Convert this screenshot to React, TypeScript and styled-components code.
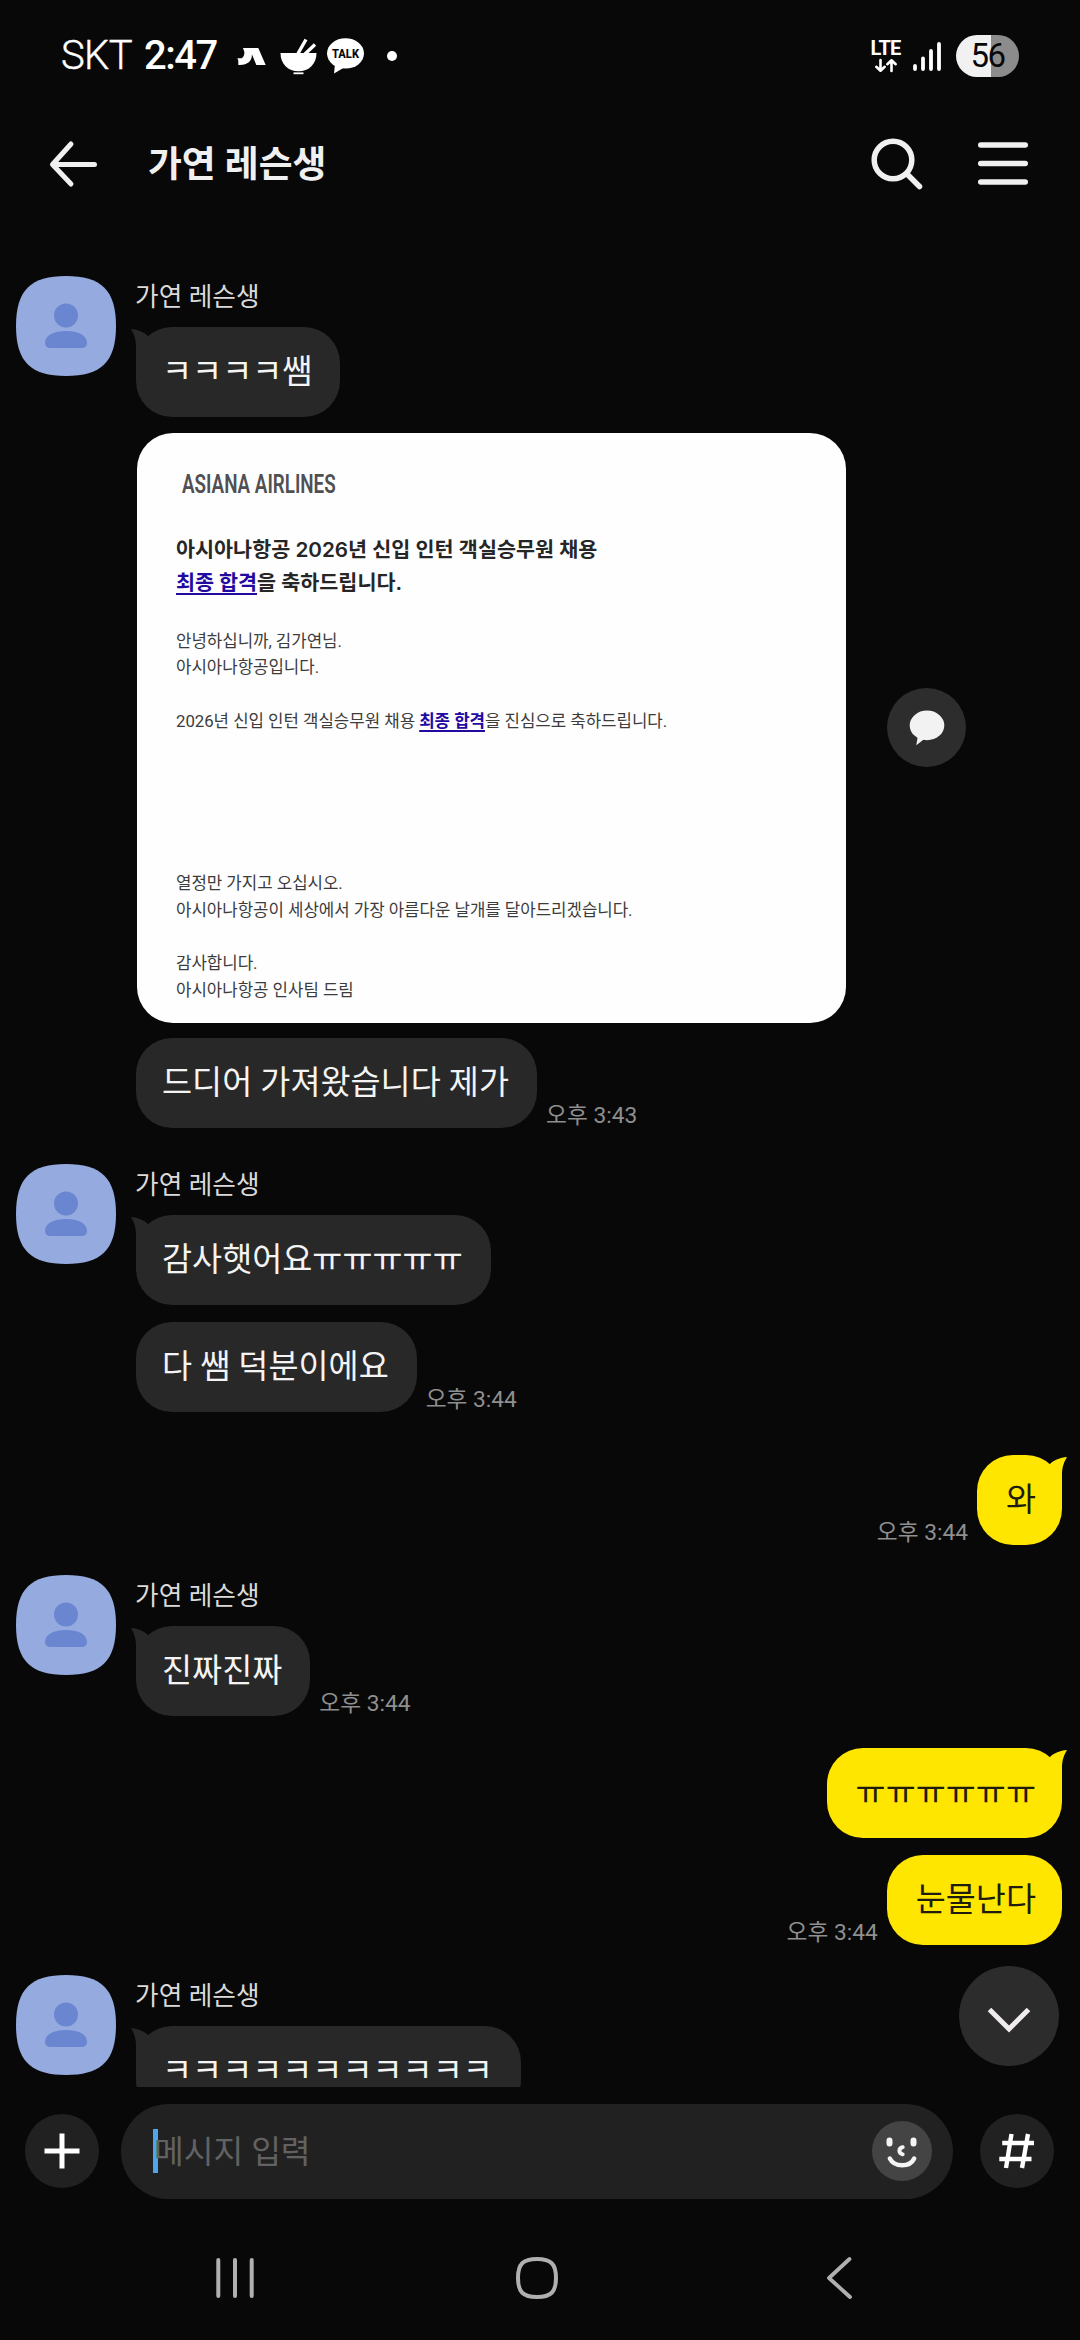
import React from 'react';
import styled, { createGlobalStyle, css } from 'styled-components';

const GlobalStyle = createGlobalStyle`
  * { box-sizing: border-box; }
  body {
    margin: 0;
    background: #080808;
    font-family: Roboto, 'Noto Sans CJK KR', sans-serif;
  }
  svg { display: block; flex: none; overflow: visible; }
`;

const Screen = styled.div`
  position: relative;
  display: flex;
  flex-direction: column;
  width: 1080px;
  height: 2340px;
  overflow: hidden;
  background: #080808;
  color: #f2f2f2;
`;

/* ---------- status bar ---------- */

const StatusBar = styled.header`
  display: flex;
  align-items: center;
  justify-content: space-between;
  height: 112px;
  padding: 0 61px 0 61px;
`;

const StatusSide = styled.div`
  display: flex;
  align-items: center;
`;

const Carrier = styled.span`
  width: 83px;
  font-size: 40px;
  font-weight: 300;
  line-height: 112px;
  letter-spacing: -0.6px;
  color: #fff;
  -webkit-text-stroke: 0.4px #fff;
`;

const Clock = styled.span`
  width: 93px;
  font-size: 40px;
  font-weight: 500;
  line-height: 112px;
  letter-spacing: -1.5px;
  color: #fff;
`;

const StatusIcons = styled.div`
  display: flex;
  align-items: center;
`;

const Network = styled.div`
  display: flex;
  flex-direction: column;
  align-items: center;
  gap: 3px;
  width: 31px;
  margin-right: 12px;
`;

const NetworkLabel = styled.span`
  font-size: 20px;
  font-weight: 700;
  line-height: 15px;
  letter-spacing: -0.8px;
  color: #fff;
`;

const Battery = styled.div`
  display: flex;
  align-items: center;
  justify-content: center;
  width: 63px;
  height: 42px;
  margin-left: 15px;
  border-radius: 21px;
  background: linear-gradient(90deg, #f1f1f1 0 56%, #8c8c8c 56%);
  color: #080808;
  font-size: 33px;
  font-weight: 400;
  line-height: 42px;
  letter-spacing: -1.5px;
`;

/* ---------- title bar ---------- */

const TitleBar = styled.nav`
  display: flex;
  align-items: center;
  height: 104px;
  padding: 0 52px 0 49px;
`;

const Title = styled.h1`
  flex: 1;
  margin: 1px 0 0 51px;
  font-size: 36.8px;
  font-weight: 700;
  line-height: 50px;
  color: #f0f0f0;
`;

const TitleActions = styled.div`
  display: flex;
  gap: 55px;
`;

/* ---------- conversation ---------- */

const Conversation = styled.main`
  display: flex;
  flex-direction: column;
  height: 1871px;
  padding-top: 60px;
  overflow: hidden;
`;

const Group = styled.section<{ $mine?: boolean; $before?: number }>`
  display: flex;
  flex: none;
  margin-top: ${(p) => p.$before ?? 0}px;
  justify-content: ${(p) => (p.$mine ? 'flex-end' : 'flex-start')};
  padding: ${(p) => (p.$mine ? '0 18px 0 0' : '0 0 0 16px')};
  gap: 20px;
`;

const Stack = styled.div<{ $mine?: boolean; $gap?: number }>`
  display: flex;
  flex-direction: column;
  align-items: ${(p) => (p.$mine ? 'flex-end' : 'flex-start')};
  gap: ${(p) => p.$gap ?? 17}px;
`;

const Messages = styled.div`
  display: flex;
  flex-direction: column;
`;

const Sender = styled.div`
  height: 51px;
  margin-left: -1px;
  font-size: 25.7px;
  line-height: 43px;
  color: #dadada;
`;

const Row = styled.div<{ $align?: string; $gap?: number }>`
  display: flex;
  align-items: ${(p) => p.$align ?? 'flex-end'};
  gap: ${(p) => p.$gap ?? 9}px;
`;

const Bubble = styled.div<{ $mine?: boolean }>`
  position: relative;
  height: 90px;
  border-radius: 36px;
  font-size: 32.7px;
  line-height: 90px;
  white-space: nowrap;
  ${(p) =>
    p.$mine
      ? css`
          padding: 0 26px 0 29px;
          background: #ffe600;
          color: #1e1c0c;
        `
      : css`
          padding: 0 28px 0 26px;
          background: #282828;
          color: #f4f4f4;
        `}
`;

const Tail = styled.svg<{ $mine?: boolean }>`
  position: absolute;
  top: 0;
  ${(p) =>
    p.$mine
      ? css`
          right: 0;
          transform: scaleX(-1);
          fill: #ffe600;
        `
      : css`
          left: 0;
          fill: #282828;
        `}
`;

const BubbleText = styled.span`
  position: relative;
`;

const Time = styled.time`
  font-size: 22.7px;
  line-height: 24px;
  white-space: nowrap;
  color: #8f8f8f;
`;

/* ---------- letter card ---------- */

const Letter = styled.article`
  width: 709px;
  height: 590px;
  margin-left: 1px;
  padding: 36px 39px 0;
  border-radius: 36px;
  background: #fefefe;
  color: #3c3c3c;
`;

const Brand = styled.div`
  height: 64px;
  padding-left: 6px;
  font-size: 25px;
  font-weight: 600;
  line-height: 32px;
  color: #505052;
  white-space: nowrap;
`;

const BrandText = styled.span`
  display: inline-block;
  transform: scaleX(0.752);
  transform-origin: 0 50%;
`;

const LetterTitle = styled.h2`
  margin: 0 0 28px;
  font-family: Inter, 'Noto Sans CJK KR', sans-serif;
  font-size: 20.7px;
  font-weight: 600;
  line-height: 33.5px;
  color: #262626;
  white-space: nowrap;
`;

const LetterLine = styled.p<{ $after?: number }>`
  margin: 0 0 ${(p) => (p.$after ?? 0) * 26.9}px;
  font-size: 16.8px;
  line-height: 26.9px;
  letter-spacing: -0.03px;
  white-space: nowrap;
`;

const Mark = styled.u`
  font-weight: 700;
  color: #2209a0;
  text-decoration-thickness: 2px;
  text-underline-offset: 3px;
`;

const RoundButton = styled.button<{ $size: number; $bg: string }>`
  display: flex;
  flex: none;
  align-items: center;
  justify-content: center;
  width: ${(p) => p.$size}px;
  height: ${(p) => p.$size}px;
  padding: 0;
  border: 0;
  border-radius: 50%;
  background: ${(p) => p.$bg};
`;

const JumpDown = styled.div`
  position: absolute;
  top: 1966px;
  right: 21px;
`;

/* ---------- composer ---------- */

const Composer = styled.footer`
  display: flex;
  align-items: center;
  height: 127px;
  padding: 1px 26px 0 25px;
`;

const Field = styled.div`
  display: flex;
  flex: 1;
  align-items: center;
  height: 95px;
  margin: 0 27px 0 22px;
  padding: 0 21px 0 32px;
  border-radius: 48px;
  background: #212121;
`;

const Caret = styled.i`
  width: 5px;
  height: 44px;
  margin-right: -4px;
  background: #4ea5ee;
`;

const Placeholder = styled.span`
  flex: 1;
  padding-top: 2px;
  font-size: 32.3px;
  line-height: 50px;
  color: #626262;
`;

const SystemNav = styled.nav`
  display: flex;
  align-items: center;
  height: 126px;
  padding: 1px 228px 0 216px;
`;

const HomeKey = styled.svg`
  margin: 0 auto 0 262px;
`;

const stroke = { fill: 'none', strokeLinecap: 'round', strokeLinejoin: 'round' } as const;

const Avatar = () => (
  <svg width="100" height="100" viewBox="0 0 100 100">
    <path
      d="M50 0C85 0 100 14 100 50S85 100 50 100 0 86 0 50 15 0 50 0Z"
      fill="#95aade"
    />
    <circle cx="50" cy="39.5" r="12" fill="#6a86d1" />
    <path d="M29 67C29 59 38 55 50 55S71 59 71 67C71 70 69 72 65 72H35C31 72 29 70 29 67Z" fill="#6a86d1" />
  </svg>
);

type MessageProps = { text: string; time?: string; mine?: boolean; tail?: boolean };

const Message = ({ text, time, mine, tail }: MessageProps) => (
  <Row>
    {mine && time && <Time>{time}</Time>}
    <Bubble $mine={mine}>
      {tail && (
        <Tail $mine={mine} width="40" height="40" viewBox="0 0 40 40">
          <path d="M-5 2C2 2.5 8 5 12 9L32 20V38H0V20C0 12 -2 7 -5 2Z" />
        </Tail>
      )}
      <BubbleText>{text}</BubbleText>
    </Bubble>
    {!mine && time && <Time>{time}</Time>}
  </Row>
);

type GroupProps = { before?: number; gap?: number; children: React.ReactNode };

const Incoming = ({ before, gap, children }: GroupProps) => (
  <Group $before={before}>
    <Avatar />
    <Messages>
      <Sender>가연 레슨생</Sender>
      <Stack $gap={gap}>{children}</Stack>
    </Messages>
  </Group>
);

const Outgoing = ({ before, gap, children }: GroupProps) => (
  <Group $mine $before={before}>
    <Stack $mine $gap={gap}>
      {children}
    </Stack>
  </Group>
);

export default function App() {
  return (
    <Screen>
      <GlobalStyle />
      <StatusBar>
        <StatusSide>
          <Carrier>SKT</Carrier>
          <Clock>2:47</Clock>
          <StatusIcons>
            <svg width="43" height="17" viewBox="0 0 43 17" fill="#fff">
              <path d="M6 0H21.3L28.7 17H19.3L14.9 6.2C15.2 13 10.5 17.6 1.3 17V12.8L.4 10.2H4.6C7.4 8.6 7.6 5 7.2 3.6Z" />
            </svg>
            <svg width="47" height="37" viewBox="0 0 47 37" fill="#fff">
              <path d="M.5 15H36.5C36.5 26 29 33.3 18.5 33.3S.5 26 .5 15Z" />
              <path d="M26 1.5L18 15.5M35 6.5L25 16" stroke="#fff" strokeWidth="3.4" />
              <path d="M13.5 35.3H23.5" stroke="#fff" strokeWidth="1.8" />
            </svg>
            <svg width="49" height="36" viewBox="0 0 49 36" fill="#fff">
              <ellipse cx="18.5" cy="15.4" rx="18.5" ry="15.2" />
              <path d="M8 26L7 35.5L18 29Z" />
              <text
                x="5"
                y="20"
                textLength="27"
                lengthAdjust="spacingAndGlyphs"
                fontFamily="Roboto, sans-serif"
                fontSize="12.5"
                fontWeight="800"
                fill="#080808"
              >
                TALK
              </text>
            </svg>
            <svg width="30" height="10" viewBox="0 0 30 10" fill="#fff">
              <circle cx="16" cy="5" r="5" />
            </svg>
          </StatusIcons>
        </StatusSide>
        <StatusSide>
          <Network>
            <NetworkLabel>LTE</NetworkLabel>
            <svg width="22" height="13" viewBox="0 0 22 13" {...stroke} stroke="#fff" strokeWidth="2.6">
              <path d="M5.5 1V11.5M1.3 7.8L5.5 11.7L9.7 7.8M16.5 12V1.5M12.3 5.2L16.5 1.3L20.7 5.2" />
            </svg>
          </Network>
          <svg width="28" height="29" viewBox="0 0 28 29" {...stroke} stroke="#fff" strokeWidth="3.8">
            <path d="M2 24V27M10 16.5V27M18 9V27M26 2V27" />
          </svg>
          <Battery>56</Battery>
        </StatusSide>
      </StatusBar>

      <TitleBar>
        <svg width="48" height="46" viewBox="0 0 48 46" {...stroke} stroke="#f0f0f0" strokeWidth="5">
          <path d="M45.5 23.5H4M22 3L3.5 23.5L22 43" />
        </svg>
        <Title>가연 레슨생</Title>
        <TitleActions>
          <svg width="52" height="52" viewBox="0 0 52 52" {...stroke} stroke="#f0f0f0" strokeWidth="5.5">
            <circle cx="22" cy="22" r="18.8" />
            <path d="M36 36L48.5 48.5" />
          </svg>
          <svg width="50" height="52" viewBox="0 0 50 52" {...stroke} stroke="#f0f0f0" strokeWidth="5.4">
            <path d="M2.7 7H47.3M2.7 25.5H47.3M2.7 44H47.3" />
          </svg>
        </TitleActions>
      </TitleBar>

      <Conversation>
        <Incoming gap={15.5}>
          <Message text="ㅋㅋㅋㅋ쌤" tail />
          <Row $align="center" $gap={41}>
            <Letter>
              <Brand>
                <BrandText>ASIANA AIRLINES</BrandText>
              </Brand>
              <LetterTitle>
                아시아나항공 2026년 신입 인턴 객실승무원 채용
                <br />
                <Mark>최종 합격</Mark>을 축하드립니다.
              </LetterTitle>
              <LetterLine>안녕하십니까, 김가연님.</LetterLine>
              <LetterLine $after={1}>아시아나항공입니다.</LetterLine>
              <LetterLine $after={5}>
                2026년 신입 인턴 객실승무원 채용 <Mark>최종 합격</Mark>을 진심으로 축하드립니다.
              </LetterLine>
              <LetterLine>열정만 가지고 오십시오.</LetterLine>
              <LetterLine $after={1}>아시아나항공이 세상에서 가장 아름다운 날개를 달아드리겠습니다.</LetterLine>
              <LetterLine>감사합니다.</LetterLine>
              <LetterLine>아시아나항공 인사팀 드림</LetterLine>
            </Letter>
            <RoundButton $size={79} $bg="#2d2d2d">
              <svg width="36" height="36" viewBox="0 0 36 36" fill="#f2f2f2">
                <ellipse cx="18" cy="15.4" rx="17.3" ry="14.8" />
                <path d="M9 25L7.3 35.2L16 28.5Z" />
              </svg>
            </RoundButton>
          </Row>
          <Message text="드디어 가져왔습니다 제가" time="오후 3:43" />
        </Incoming>

        <Incoming before={36}>
          <Message text="감사햇어요ㅠㅠㅠㅠㅠ" tail />
          <Message text="다 쌤 덕분이에요" time="오후 3:44" />
        </Incoming>

        <Outgoing before={42.5}>
          <Message mine text="와" time="오후 3:44" tail />
        </Outgoing>

        <Incoming before={30.5}>
          <Message text="진짜진짜" time="오후 3:44" tail />
        </Incoming>

        <Outgoing before={32}>
          <Message mine text="ㅠㅠㅠㅠㅠㅠ" tail />
          <Message mine text="눈물난다" time="오후 3:44" />
        </Outgoing>

        <Incoming before={30}>
          <Message text="ㅋㅋㅋㅋㅋㅋㅋㅋㅋㅋㅋ" tail />
        </Incoming>
      </Conversation>

      <Composer>
        <RoundButton $size={74} $bg="#212121">
          <svg width="36" height="36" viewBox="0 0 36 36" fill="none" stroke="#fff" strokeWidth="5">
            <path d="M.5 18H35.5M18 .5V35.5" />
          </svg>
        </RoundButton>
        <Field>
          <Caret />
          <Placeholder>메시지 입력</Placeholder>
          <RoundButton $size={60} $bg="#444">
            <svg width="60" height="60" viewBox="0 0 60 60" {...stroke} stroke="#f4f4f4">
              <path d="M17.5 19.5V22.5M41.5 19.5V22.5" strokeWidth="6" />
              <path d="M30.7 26.2C26.3 27.5 26.3 32 30.7 33.3" strokeWidth="4" />
              <path d="M17.8 37.5C22.5 46.5 38 46.5 42.2 37.5" strokeWidth="4.4" />
            </svg>
          </RoundButton>
        </Field>
        <RoundButton $size={74} $bg="#212121">
          <svg width="36" height="34" viewBox="0 0 36 34" fill="none" stroke="#fff" strokeWidth="4.4">
            <path d="M12.5 0L7 34M29 0L23 34M3.2 9H35M.3 25H32.5" />
          </svg>
        </RoundButton>
      </Composer>

      <SystemNav>
        <svg width="38" height="40" viewBox="0 0 38 40" {...stroke} stroke="#b0b0b0" strokeWidth="4">
          <path d="M2.3 2V38M19 2V38M35.7 2V38" />
        </svg>
        <HomeKey width="42" height="42" viewBox="0 0 42 42" {...stroke} stroke="#b0b0b0" strokeWidth="4">
          <path d="M21 2C35 2 40 7 40 21S35 40 21 40 2 35 2 21 7 2 21 2Z" />
        </HomeKey>
        <svg width="26" height="42" viewBox="0 0 26 42" {...stroke} stroke="#b0b0b0" strokeWidth="3.8">
          <path d="M23.5 2L3 21L24 40" />
        </svg>
      </SystemNav>

      <JumpDown>
        <RoundButton $size={100} $bg="#2c2c2c">
          <svg width="42" height="24" viewBox="0 0 42 24" fill="none" stroke="#f0ecec" strokeWidth="5">
            <path d="M1.5 1.5L21 21L40.5 1.5" transform="translate(0 4)" />
          </svg>
        </RoundButton>
      </JumpDown>
    </Screen>
  );
}
